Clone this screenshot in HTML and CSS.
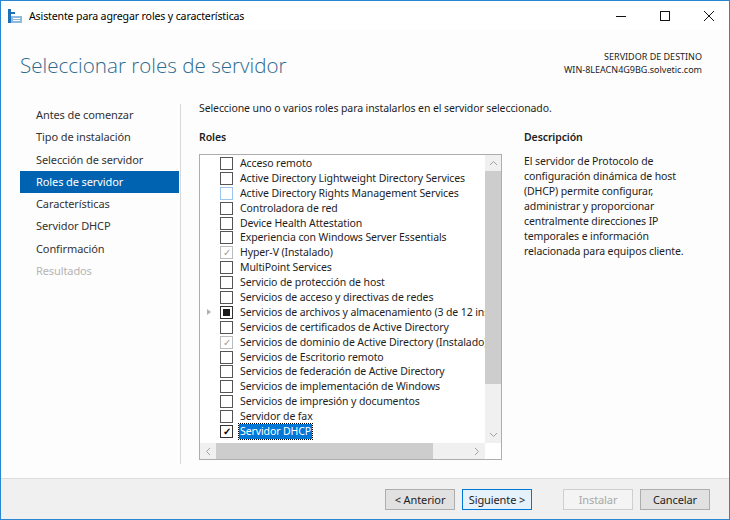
FILE: index.html
```html
<!DOCTYPE html>
<html lang="es">
<head>
    <meta charset="UTF-8">
    <title>Asistente para agregar roles y características</title>
    <link rel="stylesheet" href="styles.css">
</head>
<body>
<div class="window">
    <!-- Barra de título -->
    <div class="titlebar">
        <svg class="app-icon" width="14" height="14" viewBox="0 0 14 14">
            <rect x="0" y="0" width="3" height="14" fill="#1d6fb8"/>
            <rect x="3" y="3" width="4" height="2" fill="#1d6fb8"/>
            <rect x="3" y="7" width="11" height="7" fill="#8fb8de"/>
            <rect x="5" y="9" width="7" height="1" fill="#fff"/>
            <rect x="5" y="11" width="7" height="1" fill="#fff"/>
        </svg>
        <span class="title-text">Asistente para agregar roles y características</span>
        <div class="win-controls">
            <svg width="12" height="12" viewBox="0 0 12 12"><path d="M1 6.5h10" stroke="#111" stroke-width="1"/></svg>
            <svg width="12" height="12" viewBox="0 0 12 12"><rect x="1.5" y="1.5" width="9" height="9" fill="none" stroke="#111" stroke-width="1"/></svg>
            <svg width="12" height="12" viewBox="0 0 12 12"><path d="M1 1L11 11M11 1L1 11" stroke="#111" stroke-width="1"/></svg>
        </div>
    </div>

    <!-- Cabecera -->
    <div class="header">
        <h1>Seleccionar roles de servidor</h1>
        <div class="dest">
            <div>SERVIDOR DE DESTINO</div>
            <div>WIN-8LEACN4G9BG.solvetic.com</div>
        </div>
    </div>

    <div class="main">
        <!-- Navegación -->
        <ul class="nav">
            <li>Antes de comenzar</li>
            <li>Tipo de instalación</li>
            <li>Selección de servidor</li>
            <li class="active">Roles de servidor</li>
            <li>Características</li>
            <li>Servidor DHCP</li>
            <li>Confirmación</li>
            <li class="disabled">Resultados</li>
        </ul>

        <div class="content">
            <p class="intro">Seleccione uno o varios roles para instalarlos en el servidor seleccionado.</p>
            <div class="columns">
                <div class="roles-col">
                    <div class="label">Roles</div>
                    <div class="listbox">
                        <div class="list-area">
                            <div class="list-items">
                                <div class="row"><span class="box"></span>Acceso remoto</div>
                                <div class="row"><span class="box"></span>Active Directory Lightweight Directory Services</div>
                                <div class="row"><span class="box hover"></span>Active Directory Rights Management Services</div>
                                <div class="row"><span class="box"></span>Controladora de red</div>
                                <div class="row"><span class="box"></span>Device Health Attestation</div>
                                <div class="row"><span class="box"></span>Experiencia con Windows Server Essentials</div>
                                <div class="row"><span class="box installed">✓</span>Hyper-V (Instalado)</div>
                                <div class="row"><span class="box"></span>MultiPoint Services</div>
                                <div class="row"><span class="box"></span>Servicio de protección de host</div>
                                <div class="row"><span class="box"></span>Servicios de acceso y directivas de redes</div>
                                <div class="row"><span class="expander"></span><span class="box partial"></span>Servicios de archivos y almacenamiento (3 de 12 instalados)</div>
                                <div class="row"><span class="box"></span>Servicios de certificados de Active Directory</div>
                                <div class="row"><span class="box installed">✓</span>Servicios de dominio de Active Directory (Instalado)</div>
                                <div class="row"><span class="box"></span>Servicios de Escritorio remoto</div>
                                <div class="row"><span class="box"></span>Servicios de federación de Active Directory</div>
                                <div class="row"><span class="box"></span>Servicios de implementación de Windows</div>
                                <div class="row"><span class="box"></span>Servicios de impresión y documentos</div>
                                <div class="row"><span class="box"></span>Servidor de fax</div>
                                <div class="row"><span class="box checked">✓</span><span class="selected">Servidor DHCP</span></div>
                            </div>
                            <div class="vscroll">
                                <div class="arrow">
                                    <svg width="9" height="6" viewBox="0 0 9 6"><path d="M1 5L4.5 1.5L8 5" fill="none" stroke="#a0a0a0"/></svg>
                                </div>
                                <div class="vthumb"></div>
                                <div class="vtrack"></div>
                                <div class="arrow">
                                    <svg width="9" height="6" viewBox="0 0 9 6"><path d="M1 1L4.5 4.5L8 1" fill="none" stroke="#a0a0a0"/></svg>
                                </div>
                            </div>
                        </div>
                        <div class="hscroll">
                            <div class="harrow">
                                <svg width="6" height="9" viewBox="0 0 6 9"><path d="M5 1L1.5 4.5L5 8" fill="none" stroke="#a0a0a0"/></svg>
                            </div>
                            <div class="hthumb"></div>
                            <div class="htrack"></div>
                            <div class="harrow">
                                <svg width="6" height="9" viewBox="0 0 6 9"><path d="M1 1L4.5 4.5L1 8" fill="none" stroke="#a0a0a0"/></svg>
                            </div>
                            <div class="corner"></div>
                        </div>
                    </div>
                </div>
                <div class="desc-col">
                    <div class="label">Descripción</div>
                    <p class="desc">El servidor de Protocolo de configuración dinámica de host (DHCP) permite configurar, administrar y proporcionar centralmente direcciones IP temporales e información relacionada para equipos cliente.</p>
                </div>
            </div>
        </div>
    </div>

    <!-- Botones -->
    <div class="footer">
        <button class="btn">&lt; Anterior</button>
        <button class="btn default">Siguiente &gt;</button>
        <button class="btn disabled gap">Instalar</button>
        <button class="btn">Cancelar</button>
    </div>
</div>
</body>
</html>
```

FILE: styles.css
```css
html, body {
    margin: 0;
    padding: 0;
    width: 730px;
    height: 520px;
    overflow: hidden;
    font-family: 'Noto Sans', sans-serif;
    font-size: 10.5px;
    letter-spacing: -0.1px;
    color: #1e1e1e;
}
.window {
    width: 730px;
    height: 520px;
    box-sizing: border-box;
    border: 1px solid #2b86d1;
    background-color: #fdfdfd;
    display: flex;
    flex-direction: column;
}

/* Barra de título */
.titlebar {
    height: 29px;
    background-color: #fff;
    display: flex;
    align-items: center;
    padding-left: 7px;
}
.app-icon { margin-right: 7px; }
.title-text {
    font-size: 10.6px;
    letter-spacing: -0.15px;
    color: #000;
}
.win-controls {
    margin-left: auto;
    display: flex;
    gap: 32px;
    margin-right: 14px;
}

/* Cabecera */
.header {
    height: 67px;
    display: flex;
    justify-content: space-between;
    padding: 0 27px 0 19px;
}
.header h1 {
    margin: 21px 0 0 0;
    font-family: 'Open Sans', sans-serif;
    font-weight: 300;
    font-size: 20.6px;
    letter-spacing: 0;
    color: #2e6a8e;
}
.dest {
    margin-top: 20px;
    text-align: right;
    font-size: 9px;
    letter-spacing: 0;
    line-height: 13px;
    color: #222;
}

/* Zona principal */
.main {
    flex: 1;
    display: flex;
}
.nav {
    list-style: none;
    margin: 7px 0 0 19px;
    padding: 0;
    width: 159px;
    height: 360px;
    border-right: 1px solid #d8d8d8;
    padding-right: 1px;
}
.nav li {
    height: 22.3px;
    line-height: 22.3px;
    padding-left: 16px;
    font-size: 11px;
    color: #333;
}
.nav li.active {
    background-color: #0063b1;
    color: #fff;
}
.nav li.disabled { color: #b4b4b4; }

.content {
    flex: 1;
    padding-left: 18px;
}
.intro {
    margin: 4px 0 0 0;
    line-height: 15px;
}
.columns {
    display: flex;
    margin-top: 14px;
}
.label {
    line-height: 15px;
    font-weight: 600;
}
.roles-col { width: 303px; }
.listbox {
    margin-top: 9px;
    height: 304px;
    border: 1px solid #adadad;
    background-color: #fff;
    display: flex;
    flex-direction: column;
}
.list-area {
    flex: 1;
    display: flex;
    overflow: hidden;
}
.list-items {
    flex: 1;
    overflow: hidden;
    white-space: nowrap;
    padding-top: 1px;
}
.row {
    height: 14.9px;
    line-height: 14.9px;
    display: flex;
    align-items: center;
    padding-left: 20px;
    position: relative;
}
.box {
    width: 11px;
    height: 11px;
    border: 1px solid #555;
    margin-right: 7px;
    flex: none;
    font-size: 10px;
    line-height: 11px;
    text-align: center;
    color: #000;
    background-color: #fff;
}
.box.hover { border-color: #9cc5ef; }
.box.installed { border-color: #bcbcbc; color: #9a9a9a; }
.box.partial { background-color: #1a1a1a; box-shadow: inset 0 0 0 2px #fff; border-color: #333; }
.box.checked { font-weight: bold; border-color: #333; }
.expander {
    position: absolute;
    left: 7px;
    top: 4px;
    width: 0;
    height: 0;
    border-left: 4px solid #b0b0b0;
    border-top: 3.5px solid transparent;
    border-bottom: 3.5px solid transparent;
}
.selected {
    background-color: #0078d7;
    color: #fff;
    outline: 1px dotted #000;
    padding: 0 1px;
    margin-left: -1px;
}

.vscroll {
    width: 16px;
    display: flex;
    flex-direction: column;
    background-color: #f0f0f0;
}
.arrow {
    height: 16px;
    display: flex;
    align-items: center;
    justify-content: center;
}
.vthumb {
    height: 213px;
    background-color: #cdcdcd;
}
.vtrack { flex: 1; }
.hscroll {
    height: 16px;
    display: flex;
    background-color: #f0f0f0;
}
.harrow {
    width: 16px;
    display: flex;
    align-items: center;
    justify-content: center;
}
.hthumb {
    width: 217px;
    background-color: #cdcdcd;
}
.htrack { flex: 1; }
.corner {
    width: 16px;
    background-color: #fff;
}

.desc-col {
    margin-left: 22px;
    width: 180px;
}
.desc {
    margin: 9px 0 0 0;
    line-height: 15px;
}

/* Botones */
.footer {
    height: 40px;
    border-top: 1px solid #dcdcdc;
    background-color: #f0f0f0;
    display: flex;
    align-items: center;
    justify-content: flex-end;
    padding-right: 19px;
    gap: 7px;
}
.btn {
    width: 70px;
    height: 21px;
    font-family: 'Noto Sans', sans-serif;
    font-size: 11px;
    letter-spacing: -0.1px;
    color: #1e1e1e;
    background-color: #e1e1e1;
    border: 1px solid #adadad;
    padding: 0;
}
.btn.default {
    border-color: #0078d7;
    background-color: #e5f1fb;
}
.btn.disabled {
    color: #a8a8a8;
    background-color: #f4f4f4;
    border-color: #cfcfcf;
}
.btn.gap { margin-left: 24px; }
```
